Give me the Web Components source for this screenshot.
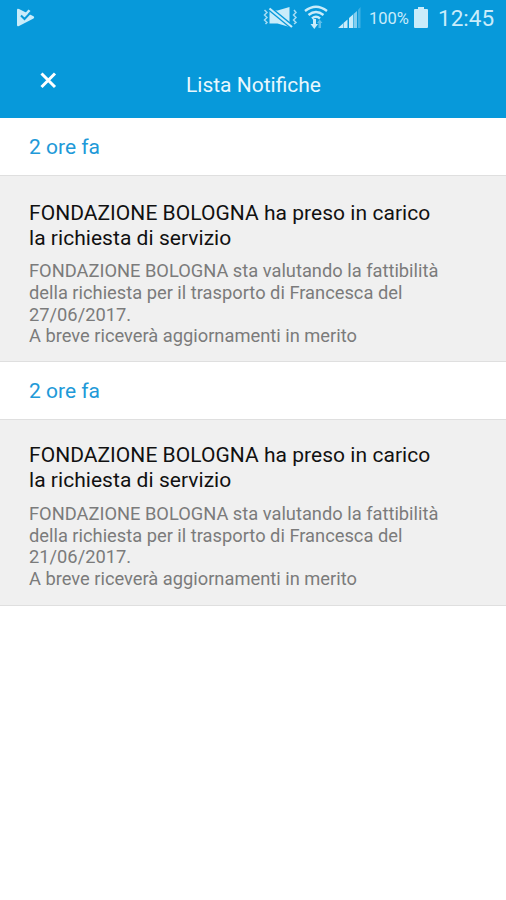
<!DOCTYPE html>
<html lang="it">
<head>
<meta charset="utf-8">
<title>Lista Notifiche</title>
<style>
  body {
    margin: 0;
    background: #fff;
    font-family: Roboto, "Liberation Sans", sans-serif;
  }
</style>
</head>
<body>
<notification-page>
  <status-bar battery="100%" time="12:45"></status-bar>
  <nav-bar>Lista Notifiche</nav-bar>
</notification-page>

<script>
/** Page shell: blue header on top, list of notifications below. */
class NotificationPage extends HTMLElement {
  constructor() {
    super();
    this.attachShadow({ mode: 'open' });
    this.shadowRoot.innerHTML = `
      <style>
        :host { display: flex; flex-direction: column; height: 900px; overflow: hidden; }
        header { height: 118px; background: #0799da; }
      </style>
      <header><slot></slot></header>
      <main></main>
    `;
  }

  connectedCallback() {
    this._render([
      { when: '2 ore fa', date: '27/06/2017', top: 24.5 },
      { when: '2 ore fa', date: '21/06/2017', top: 23.4 },
    ]);
  }

  _render(items) {
    const main = this.shadowRoot.querySelector('main');
    items.forEach(item => {
      const el = document.createElement('notification-item');
      el.style.setProperty('--card-top', `${item.top}px`);
      el.innerHTML = `
        <span slot="when">${item.when}</span>
        <span slot="title">FONDAZIONE BOLOGNA ha preso in carico<br>la richiesta di servizio</span>
        <span slot="text">FONDAZIONE BOLOGNA sta valutando la fattibilità<br>della richiesta per il trasporto di Francesca del<br>${item.date}.<br>A breve riceverà aggiornamenti in merito</span>
      `;
      main.appendChild(el);
    });
  }
}

/**
 * Android status bar.
 *
 * @property {string} battery - Battery label.
 * @property {string} time - Clock label.
 */
class StatusBar extends HTMLElement {
  constructor() {
    super();
    this.attachShadow({ mode: 'open' });
    this.shadowRoot.innerHTML = `
      <style>
        :host {
          display: flex;
          align-items: center;
          height: 36px;
          box-sizing: border-box;
          padding: 0 13px 0 16px;
          color: #c9ecfa;
        }
        svg { display: block; flex: none; fill: currentColor; }
        .play { margin-right: auto; }
        .wifi { margin-left: 5px; }
        .signal { margin-left: 10px; }
        .battery { font-size: 16.500px; margin-left: 8px; width: 41px; white-space: nowrap; }
        .time { font-size: 22.500px; width: 55px; margin-left: 10px; white-space: nowrap; }
        .cell { margin-left: 4px; }
      </style>
      <svg class="play" width="20" height="22" viewBox="0 0 20 22">
        <path d="M1 3Q1 1 3 2L17 9Q19 10 17.500 11.500L3 19Q1 20 1 18Z"/>
        <path d="M5 8.500L8.500 12L16 4" fill="none" stroke="#0799da" stroke-width="2"/>
        <path d="M12.500 2.500L14.500 4L9 9.500L7.500 8Z"/>
      </svg>
      <svg width="36" height="24" viewBox="0 0 36 24">
        <path d="M6.500 4.500H14.500L26.500 1V21L14.500 17.500H6.500Z"/>
        <path d="M4 .5L31 22.500" stroke="#0799da" stroke-width="4.800"/>
        <path d="M6.500 2.500L29 21" stroke="currentColor" stroke-width="2.200"/>
        <path d="M1.500 4L4 6.500L1.500 9L4 11.500L1.500 14L4 16.500L2.500 18M31 4L33 6.500L30.500 9L33 11.500L30.500 14L33 16.500L31 18" fill="none" stroke="currentColor" stroke-width="1.500" opacity=".8"/>
      </svg>
      <svg class="wifi" width="24" height="26" viewBox="0 0 24 26">
        <g fill="none" stroke="currentColor" stroke-width="2.400">
          <path d="M1 6Q12-2.500 23 6"/>
          <path d="M4.500 10Q12 4 19.500 10"/>
          <path d="M8 13.500Q12 10 16 13.500"/>
        </g>
        <path d="M9 14H12V19H14L10.300 24L6.500 19H9Z"/>
        <path d="M14.500 23V18H13L15.700 14.500L18.500 18H17V23Z" opacity=".45"/>
      </svg>
      <svg class="signal" width="23" height="22" viewBox="0 0 23 22">
        <path d="M0 21L5 16.500V21ZM5.500 16L9.500 12.500V21H5.500ZM11 11L15 7.500V21H11Z"/>
        <path d="M15.500 7L19 4V21H15.500Z" opacity=".65"/>
        <path d="M20 3L22.500 0V21H20Z" opacity=".3"/>
      </svg>
      <span class="battery"></span>
      <svg class="cell" width="14" height="22" viewBox="0 0 14 22">
        <path d="M4 0H10V2H13Q14 2 14 3V20Q14 21 13 21H1Q0 21 0 20V3Q0 2 1 2H4Z"/>
      </svg>
      <span class="time"></span>
    `;
  }

  connectedCallback() {
    this.shadowRoot.querySelector('.battery').textContent = this.getAttribute('battery');
    this.shadowRoot.querySelector('.time').textContent = this.getAttribute('time');
  }
}

/** Title bar with a close button on the left. */
class NavBar extends HTMLElement {
  constructor() {
    super();
    this.attachShadow({ mode: 'open' });
    this.shadowRoot.innerHTML = `
      <style>
        :host {
          display: grid;
          grid-template-columns: 96px 1fr 95px;
          height: 82px;
          color: #e9f7fd;
          font-size: 21px;
          line-height: 24px;
          text-align: center;
        }
        svg { margin: 36px 0 0 40px; }
        .title { padding-top: 37px; white-space: nowrap; }
      </style>
      <svg width="17" height="17" viewBox="0 0 17 17">
        <path d="M1.500 1.500L15 15M15 1.500L1.500 15" stroke="#fff" stroke-width="3"/>
      </svg>
      <div class="title"><slot></slot></div>
    `;
  }
}

/** One notification: date strip and grey card. Slots: when, title, text. */
class NotificationItem extends HTMLElement {
  constructor() {
    super();
    this.attachShadow({ mode: 'open' });
    this.shadowRoot.innerHTML = `
      <style>
        :host { display: block; white-space: nowrap; }
        .when {
          height: 57px;
          padding-left: 29px;
          color: #2199d8;
          font-size: 21px;
          line-height: 59px;
        }
        .card {
          height: 187px;
          box-sizing: border-box;
          padding: var(--card-top) 0 0 29px;
          background: #f0f0f0;
          border: solid #dfdfdf;
          border-width: 1px 0;
        }
        .title { color: #111; font-size: 21px; line-height: 25px; letter-spacing: .04px; }
        .text { margin-top: 9.700px; color: #7b7b7b; font-size: 18.300px; line-height: 21.670px; }
      </style>
      <div class="when"><slot name="when"></slot></div>
      <div class="card">
        <div class="title"><slot name="title"></slot></div>
        <div class="text"><slot name="text"></slot></div>
      </div>
    `;
  }
}

customElements.define('status-bar', StatusBar);
customElements.define('nav-bar', NavBar);
customElements.define('notification-item', NotificationItem);
customElements.define('notification-page', NotificationPage);
</script>
</body>
</html>
